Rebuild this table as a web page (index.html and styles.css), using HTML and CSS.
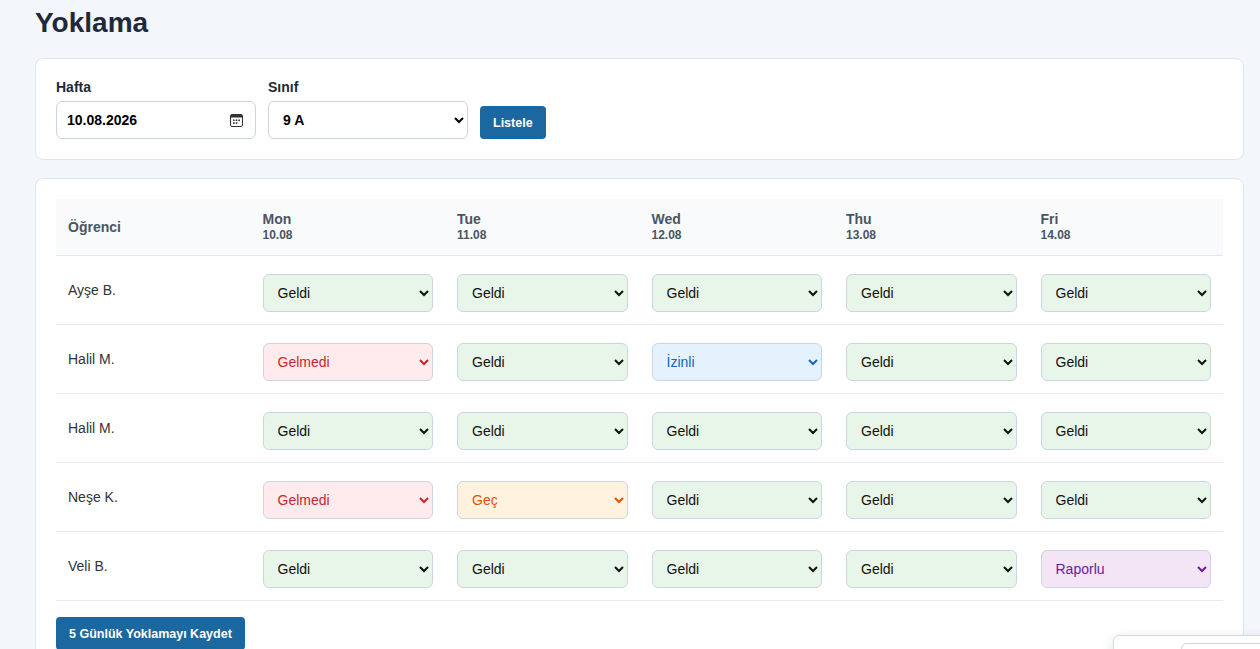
FILE: index.html
```html
<!DOCTYPE html>
<html lang="tr">
<head>
<meta charset="utf-8">
<title>Yoklama</title>
<link rel="stylesheet" href="styles.css">
</head>
<body>
<main class="page">
  <h1 class="title">Yoklama</h1>

  <section class="card filters">
    <div class="field">
      <label class="label">Hafta</label>
      <div class="date-input">
        <span class="date-value">10.08.2026</span>
        <svg class="cal-icon" width="13" height="13" viewBox="0 0 13 13" aria-hidden="true">
          <rect x="0.5" y="0.5" width="12" height="12" rx="1.5" fill="none" stroke="#333" stroke-width="1"/>
          <rect x="1" y="1" width="11" height="2.5" fill="#333"/>
          <rect x="3" y="5.5" width="1.6" height="1.6" fill="#333"/>
          <rect x="5.7" y="5.5" width="1.6" height="1.6" fill="#333"/>
          <rect x="8.4" y="5.5" width="1.6" height="1.6" fill="#333"/>
          <rect x="3" y="8.3" width="1.6" height="1.6" fill="#333"/>
          <rect x="5.7" y="8.3" width="1.6" height="1.6" fill="#333"/>
        </svg>
      </div>
    </div>
    <div class="field">
      <label class="label">Sınıf</label>
      <select class="class-select">
        <option>9 A</option>
        <option>9 B</option>
      </select>
    </div>
    <button class="btn">Listele</button>
  </section>

  <section class="card table-card">
    <table class="att">
      <thead>
        <tr>
          <th class="th-name">Öğrenci</th>
          <th><div class="day">Mon</div><div class="date">10.08</div></th>
          <th><div class="day">Tue</div><div class="date">11.08</div></th>
          <th><div class="day">Wed</div><div class="date">12.08</div></th>
          <th><div class="day">Thu</div><div class="date">13.08</div></th>
          <th><div class="day">Fri</div><div class="date">14.08</div></th>
        </tr>
      </thead>
      <tbody>
        <tr>
          <td class="name">Ayşe B.</td>
          <td><select class="st geldi"><option>Geldi</option></select></td>
          <td><select class="st geldi"><option>Geldi</option></select></td>
          <td><select class="st geldi"><option>Geldi</option></select></td>
          <td><select class="st geldi"><option>Geldi</option></select></td>
          <td><select class="st geldi"><option>Geldi</option></select></td>
        </tr>
        <tr>
          <td class="name">Halil M.</td>
          <td><select class="st gelmedi"><option>Gelmedi</option></select></td>
          <td><select class="st geldi"><option>Geldi</option></select></td>
          <td><select class="st izinli"><option>İzinli</option></select></td>
          <td><select class="st geldi"><option>Geldi</option></select></td>
          <td><select class="st geldi"><option>Geldi</option></select></td>
        </tr>
        <tr>
          <td class="name">Halil M.</td>
          <td><select class="st geldi"><option>Geldi</option></select></td>
          <td><select class="st geldi"><option>Geldi</option></select></td>
          <td><select class="st geldi"><option>Geldi</option></select></td>
          <td><select class="st geldi"><option>Geldi</option></select></td>
          <td><select class="st geldi"><option>Geldi</option></select></td>
        </tr>
        <tr>
          <td class="name">Neşe K.</td>
          <td><select class="st gelmedi"><option>Gelmedi</option></select></td>
          <td><select class="st gec"><option>Geç</option></select></td>
          <td><select class="st geldi"><option>Geldi</option></select></td>
          <td><select class="st geldi"><option>Geldi</option></select></td>
          <td><select class="st geldi"><option>Geldi</option></select></td>
        </tr>
        <tr>
          <td class="name">Veli B.</td>
          <td><select class="st geldi"><option>Geldi</option></select></td>
          <td><select class="st geldi"><option>Geldi</option></select></td>
          <td><select class="st geldi"><option>Geldi</option></select></td>
          <td><select class="st geldi"><option>Geldi</option></select></td>
          <td><select class="st raporlu"><option>Raporlu</option></select></td>
        </tr>
      </tbody>
    </table>
    <button class="btn save">5 Günlük Yoklamayı Kaydet</button>
  </section>
</main>

<div class="float-panel">
  <div class="float-inner"></div>
</div>
</body>
</html>
```

FILE: styles.css
```css
* { box-sizing: border-box; }

html, body {
  margin: 0;
  padding: 0;
  background: #f3f6fa;
  font-family: "Liberation Sans", Arial, sans-serif;
  color: #1f2937;
  overflow: hidden;
}

.page {
  padding: 6px 16px 40px 35px;
}

.title {
  margin: 0 0 18px 0;
  font-size: 28px;
  line-height: 34px;
  font-weight: 700;
  color: #1e293b;
}

.card {
  background: #fff;
  border: 1px solid #dfe5ee;
  border-radius: 8px;
  padding: 20px;
}

.filters {
  display: flex;
  align-items: flex-end;
  gap: 12px;
  margin-bottom: 18px;
}

.field {
  display: flex;
  flex-direction: column;
  gap: 6px;
  width: 200px;
}

.label {
  font-size: 14px;
  font-weight: 700;
  line-height: 16px;
  color: #1f2937;
}

.date-input {
  height: 38px;
  border: 1px solid #cbd5e1;
  border-radius: 6px;
  display: flex;
  align-items: center;
  justify-content: space-between;
  padding: 0 12px 0 10px;
  background: #fff;
}

.date-value {
  font-size: 14px;
  font-weight: 700;
  color: #000;
}

.cal-icon { display: block; }

.class-select {
  height: 38px;
  border: 1px solid #cbd5e1;
  border-radius: 6px;
  background: #fff;
  font-family: inherit;
  font-size: 14px;
  font-weight: 700;
  color: #000;
  padding: 0 8px 0 10px;
}

.btn {
  background: #1b67a0;
  color: #fff;
  border: 0;
  border-radius: 4px;
  font-family: inherit;
  font-size: 12.5px;
  font-weight: 700;
  height: 33px;
  padding: 0 13px;
  margin-bottom: 0;
}

.table-card {
  min-height: 520px;
}

.att {
  width: 100%;
  border-collapse: collapse;
  table-layout: fixed;
}

.att th {
  background: #f8fafc;
  text-align: left;
  padding: 12px;
  height: 56px;
  border-bottom: 1px solid #e2e8f0;
  color: #4b5563;
  font-weight: 700;
  vertical-align: middle;
}

.th-name { font-size: 14px; }

.day {
  font-size: 14px;
  line-height: 16px;
}

.date {
  font-size: 12px;
  line-height: 16px;
}

.att td {
  padding: 12px;
  border-bottom: 1px solid #e5e9f0;
  vertical-align: middle;
}

.name {
  font-size: 14px;
  color: #333;
}

.st {
  display: block;
  width: 100%;
  height: 38px;
  margin-top: 6px;
  border: 1px solid #cbd5e1;
  border-radius: 6px;
  font-family: inherit;
  font-size: 14px;
  padding: 0 6px 0 10px;
}

.geldi   { background: #e8f5e9; color: #111; }
.gelmedi { background: #ffebee; color: #c62828; }
.izinli  { background: #e3f2fd; color: #1565c0; }
.gec     { background: #fff3e0; color: #e65100; }
.raporlu { background: #f3e5f5; color: #6a1b9a; }

.save {
  margin-top: 16px;
}

.float-panel {
  position: fixed;
  left: 1113px;
  top: 635px;
  width: 200px;
  height: 100px;
  background: #fff;
  border: 1px solid #cfd8e3;
  border-radius: 6px;
  box-shadow: 0 4px 14px rgba(15, 23, 42, 0.12);
}

.float-inner {
  position: absolute;
  left: 67px;
  top: 7px;
  width: 200px;
  height: 60px;
  border: 1px solid #cfd8e3;
  border-radius: 6px;
}
```
